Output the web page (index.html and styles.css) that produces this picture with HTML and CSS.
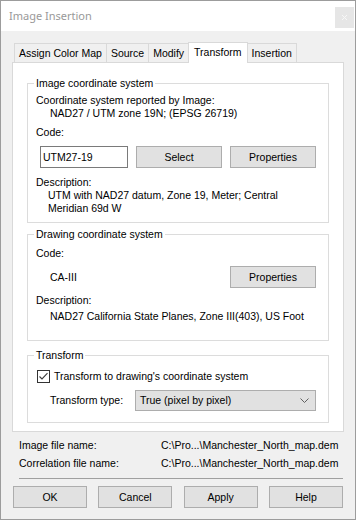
FILE: index.html
```html
<!DOCTYPE html>
<html lang="en">
<head>
<meta charset="UTF-8">
<meta name="viewport" content="width=device-width, initial-scale=1.0">
<title>Image Insertion</title>
<link rel="stylesheet" href="styles.css">
</head>
<body>
<div class="window">
    <div class="titlebar">
        <span class="title">Image Insertion</span>
        <div class="close">
            <svg width="19" height="21" viewBox="0 0 19 21">
                <path d="M7 8 L12 13 M12 8 L7 13" stroke="#f7f7f7" stroke-width="1" fill="none"/>
            </svg>
        </div>
    </div>

    <div class="tabs">
        <div class="tab">Assign Color Map</div>
        <div class="tab">Source</div>
        <div class="tab">Modify</div>
        <div class="tab active">Transform</div>
        <div class="tab">Insertion</div>
    </div>

    <div class="panel">
        <!-- Image coordinate system -->
        <div class="group group-image">
            <div class="group-title">Image coordinate system</div>
            <div class="line first">Coordinate system reported by Image:</div>
            <div class="line indent">NAD27 / UTM zone 19N; (EPSG 26719)</div>
            <div class="line label-code">Code:</div>
            <div class="row row-code">
                <div class="textbox">UTM27-19</div>
                <div class="button">Select</div>
                <div class="button">Properties</div>
            </div>
            <div class="line label-desc">Description:</div>
            <div class="line indent-desc">UTM with NAD27 datum, Zone 19, Meter; Central</div>
            <div class="line indent-desc">Meridian 69d W</div>
        </div>

        <!-- Drawing coordinate system -->
        <div class="group group-drawing">
            <div class="group-title">Drawing coordinate system</div>
            <div class="line first-code">Code:</div>
            <div class="row row-drawing">
                <span class="indent code-value">CA-III</span>
                <div class="button">Properties</div>
            </div>
            <div class="line label-desc2">Description:</div>
            <div class="line indent desc2">NAD27 California State Planes, Zone III(403), US Foot</div>
        </div>

        <!-- Transform -->
        <div class="group group-transform">
            <div class="group-title">Transform</div>
            <div class="row row-check">
                <span class="checkbox">
                    <svg width="13" height="13" viewBox="0 0 13 13">
                        <path d="M2.5 6.5 L5 9 L10.5 3.2" stroke="#3c3c3c" stroke-width="1.1" fill="none"/>
                    </svg>
                </span>
                <span>Transform to drawing's coordinate system</span>
            </div>
            <div class="row row-type">
                <span class="type-label">Transform type:</span>
                <div class="combo">
                    <span>True (pixel by pixel)</span>
                    <svg width="9" height="6" viewBox="0 0 9 6">
                        <path d="M0.5 0.5 L4.5 4.5 L8.5 0.5" stroke="#606060" stroke-width="1" fill="none"/>
                    </svg>
                </div>
            </div>
        </div>
    </div>

    <div class="files">
        <span>Image file name:</span>
        <span>C:\Pro...\Manchester_North_map.dem</span>
        <span>Correlation file name:</span>
        <span>C:\Pro...\Manchester_North_map.dem</span>
    </div>

    <div class="separator"></div>

    <div class="actions">
        <div class="button">OK</div>
        <div class="button">Cancel</div>
        <div class="button">Apply</div>
        <div class="button">Help</div>
    </div>
</div>
</body>
</html>
```

FILE: styles.css
```css
/* Dialog window */
body {
    margin: 0;
    font-family: 'Liberation Sans', Arial, sans-serif;
    font-size: 10.5px;
    line-height: 13px;
    color: #000;
    background: #f0f0f0;
}

.window {
    width: 356px;
    height: 520px;
    box-sizing: border-box;
    border: 1px solid #9c9c9c;
    background: #f0f0f0;
}

.titlebar {
    height: 30px;
    background: #fff;
    display: flex;
    justify-content: space-between;
    padding-left: 8px;
}

.title {
    font-family: 'Noto Sans', sans-serif;
    font-size: 11px;
    line-height: 30px;
    color: #999;
}

.close {
    width: 19px;
    height: 21px;
    margin: 6px 1px 0 0;
    background: #e6e6e6;
}

.close svg {
    display: block;
}

/* Tabs */
.tabs {
    display: flex;
    align-items: flex-end;
    height: 20px;
    margin: 11px 0 0 13px;
}

.tab {
    height: 18px;
    line-height: 18px;
    padding: 0 4px;
    border: 1px solid #d9d9d9;
    border-bottom: none;
    margin-right: -1px;
    background: #f0f0f0;
}

.tab.active {
    position: relative;
    z-index: 1;
    height: 20px;
    line-height: 18px;
    margin-bottom: -1px;
    padding: 0 5px;
    background: #fff;
}

.panel {
    margin: 0 11px;
    border: 1px solid #d9d9d9;
    background: #fff;
    padding: 20px 14px 8px 14px;
}

/* Group boxes */
.group {
    border: 1px solid #dcdcdc;
    padding: 0 8px;
}

.group-title {
    width: fit-content;
    margin: -7px 0 0 -2px;
    padding: 0 2px;
    background: #fff;
}

.group-image {
    padding-bottom: 7px;
}

.group-drawing {
    margin-top: 11px;
    padding-bottom: 17px;
}

.group-transform {
    margin-top: 14px;
    padding-bottom: 11px;
}

.line {
    white-space: nowrap;
}

.first { margin-top: 4px; }
.indent { padding-left: 14px; }
.indent-desc { padding-left: 12px; }
.label-code { margin-top: 6px; }
.label-desc { margin-top: 8px; }
.first-code { margin-top: 6px; }
.label-desc2 { margin-top: 6px; }
.desc2 { margin-top: 3px; }

.row {
    display: flex;
    align-items: center;
}

.row-code {
    margin-top: 7px;
    gap: 8px;
    padding-left: 4px;
}

.row-drawing {
    margin-top: 6px;
    justify-content: space-between;
    padding-right: 4px;
}

.textbox {
    width: 88px;
    height: 22px;
    box-sizing: border-box;
    border: 1px solid #7a7a7a;
    line-height: 20px;
    padding-left: 2px;
    background: #fff;
}

.button {
    width: 86px;
    height: 22px;
    box-sizing: border-box;
    border: 1px solid #adadad;
    background: #e1e1e1;
    line-height: 20px;
    text-align: center;
}

.row-check {
    margin-top: 8px;
    padding-left: 1px;
    gap: 4px;
}

.checkbox {
    width: 13px;
    height: 13px;
    box-sizing: border-box;
    border: 1px solid #333;
    background: #fff;
}

.checkbox svg {
    display: block;
    margin: -1px;
}

.row-type {
    margin-top: 7px;
    padding-left: 14px;
}

.type-label {
    width: 85px;
}

.combo {
    width: 181px;
    height: 21px;
    box-sizing: border-box;
    border: 1px solid #adadad;
    background: #e1e1e1;
    display: flex;
    align-items: center;
    justify-content: space-between;
    padding: 0 6px 0 4px;
}

.combo svg {
    display: block;
}

/* File names */
.files {
    display: grid;
    grid-template-columns: 142px 1fr;
    row-gap: 5px;
    margin: 7px 0 0 18px;
}

.separator {
    margin: 8px 12px 0 18px;
    border-top: 1px solid #a0a0a0;
}

.actions {
    display: flex;
    justify-content: space-between;
    margin: 7px 12px 0 12px;
}

.actions .button {
    width: 74px;
}
```
